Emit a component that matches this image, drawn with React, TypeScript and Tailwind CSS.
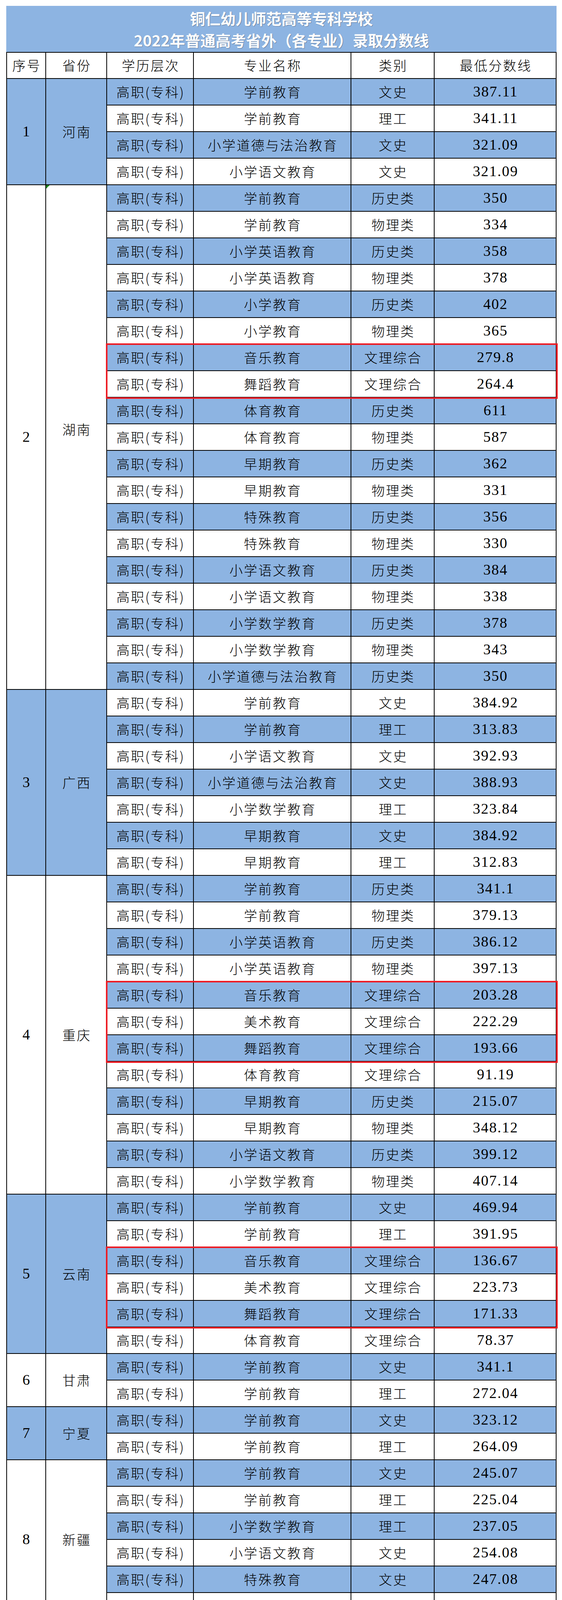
type Row = [string, string, string, boolean?];

type Province = {
  no: number;
  name: string;
  bold?: boolean;
  lift?: boolean;
  rows: Row[];
};

const provinces: Province[] = [
  {
    no: 1,
    name: "河南",
    rows: [
      ["学前教育", "文史", "387.11"],
      ["学前教育", "理工", "341.11"],
      ["小学道德与法治教育", "文史", "321.09"],
      ["小学语文教育", "文史", "321.09"],
    ],
  },
  {
    no: 2,
    name: "湖南",
    lift: true,
    rows: [
      ["学前教育", "历史类", "350"],
      ["学前教育", "物理类", "334"],
      ["小学英语教育", "历史类", "358"],
      ["小学英语教育", "物理类", "378"],
      ["小学教育", "历史类", "402"],
      ["小学教育", "物理类", "365"],
      ["音乐教育", "文理综合", "279.8", true],
      ["舞蹈教育", "文理综合", "264.4", true],
      ["体育教育", "历史类", "611"],
      ["体育教育", "物理类", "587"],
      ["早期教育", "历史类", "362"],
      ["早期教育", "物理类", "331"],
      ["特殊教育", "历史类", "356"],
      ["特殊教育", "物理类", "330"],
      ["小学语文教育", "历史类", "384"],
      ["小学语文教育", "物理类", "338"],
      ["小学数学教育", "历史类", "378"],
      ["小学数学教育", "物理类", "343"],
      ["小学道德与法治教育", "历史类", "350"],
    ],
  },
  {
    no: 3,
    name: "广西",
    rows: [
      ["学前教育", "文史", "384.92"],
      ["学前教育", "理工", "313.83"],
      ["小学语文教育", "文史", "392.93"],
      ["小学道德与法治教育", "文史", "388.93"],
      ["小学数学教育", "理工", "323.84"],
      ["早期教育", "文史", "384.92"],
      ["早期教育", "理工", "312.83"],
    ],
  },
  {
    no: 4,
    name: "重庆",
    rows: [
      ["学前教育", "历史类", "341.1"],
      ["学前教育", "物理类", "379.13"],
      ["小学英语教育", "历史类", "386.12"],
      ["小学英语教育", "物理类", "397.13"],
      ["音乐教育", "文理综合", "203.28", true],
      ["美术教育", "文理综合", "222.29", true],
      ["舞蹈教育", "文理综合", "193.66", true],
      ["体育教育", "文理综合", "91.19"],
      ["早期教育", "历史类", "215.07"],
      ["早期教育", "物理类", "348.12"],
      ["小学语文教育", "历史类", "399.12"],
      ["小学数学教育", "物理类", "407.14"],
    ],
  },
  {
    no: 5,
    name: "云南",
    rows: [
      ["学前教育", "文史", "469.94"],
      ["学前教育", "理工", "391.95"],
      ["音乐教育", "文理综合", "136.67", true],
      ["美术教育", "文理综合", "223.73", true],
      ["舞蹈教育", "文理综合", "171.33", true],
      ["体育教育", "文理综合", "78.37"],
    ],
  },
  {
    no: 6,
    name: "甘肃",
    rows: [
      ["学前教育", "文史", "341.1"],
      ["学前教育", "理工", "272.04"],
    ],
  },
  {
    no: 7,
    name: "宁夏",
    rows: [
      ["学前教育", "文史", "323.12"],
      ["学前教育", "理工", "264.09"],
    ],
  },
  {
    no: 8,
    name: "新疆",
    rows: [
      ["学前教育", "文史", "245.07"],
      ["学前教育", "理工", "225.04"],
      ["小学数学教育", "理工", "237.05"],
      ["小学语文教育", "文史", "254.08"],
      ["特殊教育", "文史", "247.08"],
      ["特殊教育", "理工", "221.04"],
    ],
  },
  {
    no: 9,
    name: "山西",
    rows: [
      ["学前教育", "文史", "187.07"],
      ["学前教育", "理工", "231.02"],
    ],
  },
  {
    no: 10,
    name: "四川",
    bold: true,
    rows: [
      ["学前教育", "文史", "422.08"],
      ["学前教育", "理工", "365.07"],
      ["小学英语教育", "文史", "429.09"],
      ["小学英语教育", "理工", "354.07"],
      ["小学教育", "文史", "436.09"],
      ["小学教育", "理工", "372.06"],
      ["音乐教育", "文理综合", "215.93", true],
      ["美术教育", "文理综合", "223.33", true],
      ["舞蹈教育", "文理综合", "272", true],
      ["体育教育", "文理综合", "82.42"],
      ["小学语文教育", "文史", "422.08"],
      ["小学数学教育", "理工", "354.06"],
    ],
  },
  {
    no: 11,
    name: "河北",
    bold: true,
    lift: true,
    rows: [
      ["学前教育", "历史类", "360"],
      ["学前教育", "物理类", "374"],
    ],
  },
  {
    no: 12,
    name: "青海",
    rows: [
      ["学前教育", "文史", "260.07"],
      ["学前教育", "理工", "237.03"],
    ],
  },
  {
    no: 13,
    name: "陕西",
    rows: [
      ["学前教育", "文史", "302.08"],
      ["学前教育", "理工", "285.09"],
    ],
  },
  {
    no: 14,
    name: "江西",
    rows: [
      ["学前教育", "文史", "339.93"],
      ["学前教育", "理工", "312.85"],
    ],
  },
  {
    no: 15,
    name: "安徽",
    rows: [
      ["学前教育", "文史", "330.95"],
      ["学前教育", "理工", "287.98"],
    ],
  },
  {
    no: 16,
    name: "山东",
    rows: [
      ["学前教育", "文理综合", "398"],
      ["体育教育", "文理综合", "580.3"],
    ],
  },
];

const cjk = "font-['Noto_Sans_CJK_SC',sans-serif] font-light text-[34px] leading-[1.2] tracking-[3px] pl-[3px]";
const num = "font-['Liberation_Serif',serif] text-[38px] leading-[1.2] tracking-[2px] pl-[2px]";
const cell = "flex items-center justify-center border-r-2 border-b-2 border-black text-black";

function DataRow({ row, blue }: { row: Row; blue: boolean }) {
  const bg = blue ? "bg-[#8db4e2]" : "bg-white";
  return (
    <div className={`flex h-[68px] ${bg}`}>
      <div className={`${cell} w-[222px] ${cjk}`}>高职(专科)</div>
      <div className={`${cell} w-[403px] ${cjk}`}>{row[0]}</div>
      <div className={`${cell} w-[213px] ${cjk}`}>{row[1]}</div>
      <div className={`${cell} w-[312px] ${num}`}>{row[2]}</div>
    </div>
  );
}

export default function App() {
  let counter = 0;

  return (
    <div className="bg-white pt-[15px] pb-4 pl-4">
      <div className="w-[1408px]">
        <div className="flex h-[118px] flex-col items-center justify-center bg-[#8db4e2] font-['Noto_Sans_CJK_SC',sans-serif] text-[39px] font-bold leading-[56px] text-white [text-shadow:1px_1px_1px_rgba(30,40,60,0.45)]">
          <div>铜仁幼儿师范高等专科学校</div>
          <div>2022年普通高考省外（各专业）录取分数线</div>
        </div>

        <div className="border-l-2 border-t-2 border-black">
          <div className="flex h-[67px] bg-white">
            <div className={`${cell} w-[100px] ${cjk}`}>序号</div>
            <div className={`${cell} w-[156px] ${cjk}`}>省份</div>
            <div className={`${cell} w-[222px] ${cjk}`}>学历层次</div>
            <div className={`${cell} w-[403px] ${cjk}`}>专业名称</div>
            <div className={`${cell} w-[213px] ${cjk}`}>类别</div>
            <div className={`${cell} w-[312px] ${cjk}`}>最低分数线</div>
          </div>

          {provinces.map((p) => {
            const blue = p.no % 2 === 1;
            const bg = blue ? "bg-[#8db4e2]" : "bg-white";

            // split rows into plain / highlighted runs
            const groups: { red: boolean; rows: { row: Row; idx: number }[] }[] = [];
            p.rows.forEach((row) => {
              counter += 1;
              const red = !!row[3];
              const last = groups[groups.length - 1];
              if (last && last.red === red) last.rows.push({ row, idx: counter });
              else groups.push({ red, rows: [{ row, idx: counter }] });
            });

            return (
              <div key={p.no} className="flex">
                <div className={`${cell} w-[100px] ${bg} ${num}`}>{p.no}</div>
                <div className={`${cell} relative w-[156px] ${bg} ${cjk} ${p.bold ? "font-bold" : ""}`}>
                  {p.no === 2 && (
                    <div className="absolute left-0 top-0 h-0 w-0 border-t-[9px] border-r-[9px] border-t-[#1f8a1f] border-r-transparent" />
                  )}
                  <span className={p.lift ? "mb-10" : ""}>{p.name}</span>
                </div>
                <div className="flex w-[1150px] flex-col">
                  {groups.map((g, gi) => (
                    <div
                      key={gi}
                      className={g.red ? "relative z-10 outline-4 outline-[#ed1c24] -outline-offset-1" : ""}
                    >
                      {g.rows.map(({ row, idx }) => (
                        <DataRow key={idx} row={row} blue={idx % 2 === 1} />
                      ))}
                    </div>
                  ))}
                </div>
              </div>
            );
          })}
        </div>
      </div>
    </div>
  );
}
